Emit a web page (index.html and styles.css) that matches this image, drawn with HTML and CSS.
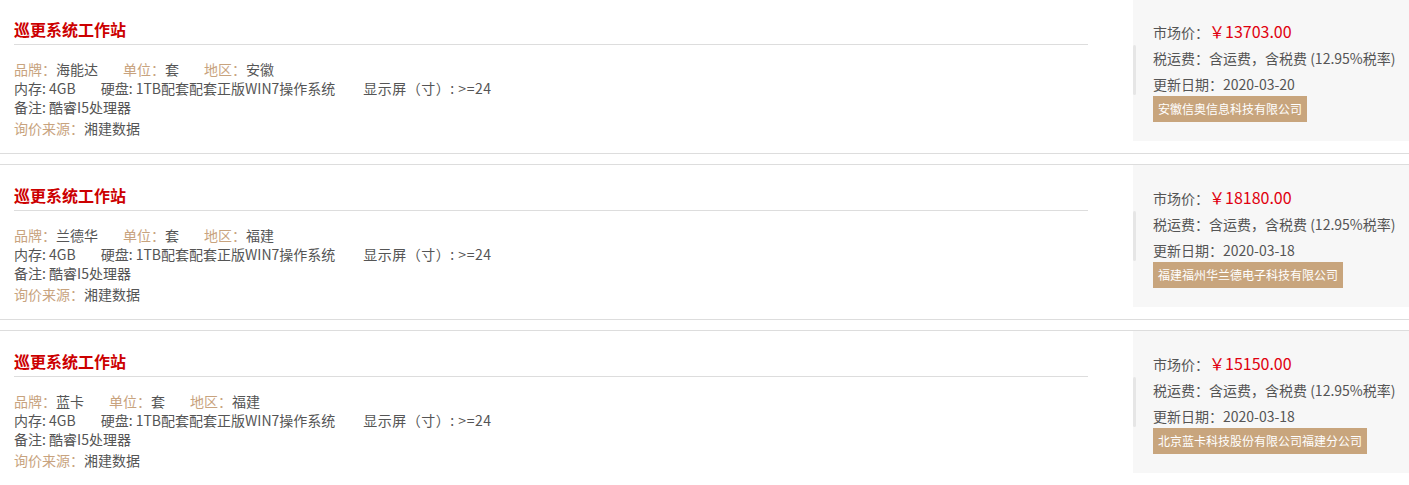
FILE: index.html
```html
<!DOCTYPE html>
<html lang="zh-CN">
<head>
    <meta charset="UTF-8">
    <meta name="viewport" content="width=device-width, initial-scale=1.0">
    <title>询价列表</title>
    <link rel="stylesheet" href="styles.css">
</head>
<body>
    <div class="list">
        <div class="item">
            <div class="info">
                <h3 class="title">巡更系统工作站</h3>
                <p class="row"><span><em>品牌：</em>海能达</span><span><em>单位：</em>套</span><span><em>地区：</em>安徽</span></p>
                <p class="row"><span>内存: 4GB</span><span>硬盘: 1TB配套配套正版WIN7操作系统</span><span class="screen">显示屏（寸）: &gt;=24</span></p>
                <p class="row"><span>备注: 酷睿I5处理器</span></p>
                <p class="row source"><span><em>询价来源：</em>湘建数据</span></p>
            </div>
            <div class="price">
                <p>市场价：<b>￥13703.00</b></p>
                <p>税运费：含运费，含税费 (12.95%税率)</p>
                <p>更新日期：2020-03-20</p>
                <span class="company">安徽信奥信息科技有限公司</span>
            </div>
        </div>

        <div class="item">
            <div class="info">
                <h3 class="title">巡更系统工作站</h3>
                <p class="row"><span><em>品牌：</em>兰德华</span><span><em>单位：</em>套</span><span><em>地区：</em>福建</span></p>
                <p class="row"><span>内存: 4GB</span><span>硬盘: 1TB配套配套正版WIN7操作系统</span><span class="screen">显示屏（寸）: &gt;=24</span></p>
                <p class="row"><span>备注: 酷睿I5处理器</span></p>
                <p class="row source"><span><em>询价来源：</em>湘建数据</span></p>
            </div>
            <div class="price">
                <p>市场价：<b>￥18180.00</b></p>
                <p>税运费：含运费，含税费 (12.95%税率)</p>
                <p>更新日期：2020-03-18</p>
                <span class="company">福建福州华兰德电子科技有限公司</span>
            </div>
        </div>

        <div class="item">
            <div class="info">
                <h3 class="title">巡更系统工作站</h3>
                <p class="row"><span><em>品牌：</em>蓝卡</span><span><em>单位：</em>套</span><span><em>地区：</em>福建</span></p>
                <p class="row"><span>内存: 4GB</span><span>硬盘: 1TB配套配套正版WIN7操作系统</span><span class="screen">显示屏（寸）: &gt;=24</span></p>
                <p class="row"><span>备注: 酷睿I5处理器</span></p>
                <p class="row source"><span><em>询价来源：</em>湘建数据</span></p>
            </div>
            <div class="price">
                <p>市场价：<b>￥15150.00</b></p>
                <p>税运费：含运费，含税费 (12.95%税率)</p>
                <p>更新日期：2020-03-18</p>
                <span class="company">北京蓝卡科技股份有限公司福建分公司</span>
            </div>
        </div>
    </div>
</body>
</html>
```

FILE: styles.css
```css
body {
    margin: 0;
    font-family: "Noto Sans CJK SC", "Microsoft YaHei", sans-serif;
    font-size: 14px;
    color: #555;
    background: #fff;
}
.list {
    margin-top: -2px;
}
.item {
    display: flex;
    border-top: 1px solid #ddd;
    border-bottom: 1px solid #ddd;
    padding-bottom: 12px;
    margin-bottom: 10px;
}
.info {
    flex: 1;
    padding-left: 14px;
    margin-right: 45px;
}
.title {
    margin: 0;
    padding-top: 18px;
    padding-bottom: 3px;
    line-height: 24px;
    font-size: 16px;
    font-weight: bold;
    color: #cc0000;
    border-bottom: 1px solid #ddd;
}
.row {
    margin: 0;
    line-height: 19px;
    white-space: nowrap;
}
.title + .row {
    margin-top: 15px;
}
.row.source {
    margin-top: 2px;
}
.row span {
    margin-right: 25px;
}
.row .screen {
    margin-left: 3px;
    letter-spacing: 0.5px;
}
.row em {
    font-style: normal;
    color: #c8a37e;
}
.price {
    position: relative;
    width: 256px;
    height: 123px;
    padding: 19px 0 0 20px;
    background: #f7f7f7;
}
.price::before {
    content: '';
    position: absolute;
    left: 0;
    top: 46px;
    width: 3px;
    height: 50px;
    border-radius: 2px;
    background: #e6e6e6;
}
.price p {
    margin: 0;
    line-height: 26px;
    white-space: nowrap;
}
.price b {
    font-weight: normal;
    font-size: 16px;
    color: #e0000f;
}
.company {
    display: inline-block;
    margin-top: -1px;
    padding: 0 5px;
    line-height: 26px;
    font-size: 12px;
    color: #fff;
    background: #c8a57d;
}
```
